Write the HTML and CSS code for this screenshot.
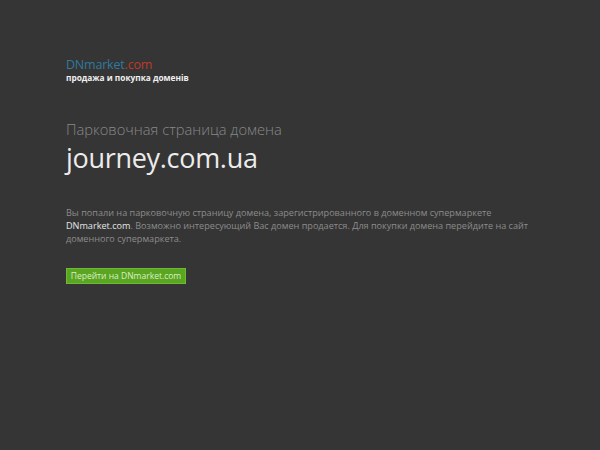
FILE: index.html
```html
<!DOCTYPE html>
<html>
<head>
<meta charset="utf-8">
<link rel="stylesheet" href="styles.css">
</head>
<body>
<div class="page">
  <div class="logo">
    <div class="logo-name"><span class="dn">DNmarket</span><span class="com">.com</span></div>
    <div class="logo-sub">продажа и покупка доменів</div>
  </div>
  <div class="title">Парковочная страница домена</div>
  <div class="domain">journey.com.ua</div>
  <p class="text">Вы попали на парковочную страницу домена, зарегистрированного в доменном супермаркете <b>DNmarket.com</b>. Возможно интересующий Вас домен продается. Для покупки домена перейдите на сайт доменного супермаркета.</p>
  <a class="btn" href="#">Перейти на DNmarket.com</a>
</div>
</body>
</html>
```
FILE: styles.css
```css
html, body { margin: 0; padding: 0; }
body {
  background: #353535;
  font-family: "Open Sans", "DejaVu Sans", sans-serif;
  width: 600px;
  height: 450px;
  overflow: hidden;
}
.page {
  padding: 58px 0 0 66px;
  display: flex;
  flex-direction: column;
  align-items: flex-start;
}
.logo-name {
  font-size: 12.5px;
  line-height: 14px;
  letter-spacing: -0.2px;
}
.dn { color: #2f7a9e; }
.com { color: #c0392b; }
.logo-sub {
  font-size: 8.3px;
  font-weight: bold;
  color: #f0f0f0;
  line-height: 11px;
}
.title {
  margin-top: 37px;
  font-size: 14.7px;
  color: #888888;
  line-height: 18px;
  font-weight: 300;
}
.domain {
  margin-top: 3px;
  font-size: 27px;
  color: #ececec;
  line-height: 34px;
  letter-spacing: -0.3px;
}
.text {
  margin: 31px 0 0 0;
  width: 468px;
  font-size: 9.1px;
  line-height: 13px;
  color: #8c8c8c;
}
.text b { color: #e6e6e6; font-weight: normal; }
.btn {
  margin-top: 23px;
  display: block;
  width: 118px;
  height: 14px;
  line-height: 14px;
  background: #5aa521;
  border: 1px solid #6dbb33;
  color: #d9efc6;
  font-size: 8.5px;
  text-align: center;
  text-decoration: none;
}
```
